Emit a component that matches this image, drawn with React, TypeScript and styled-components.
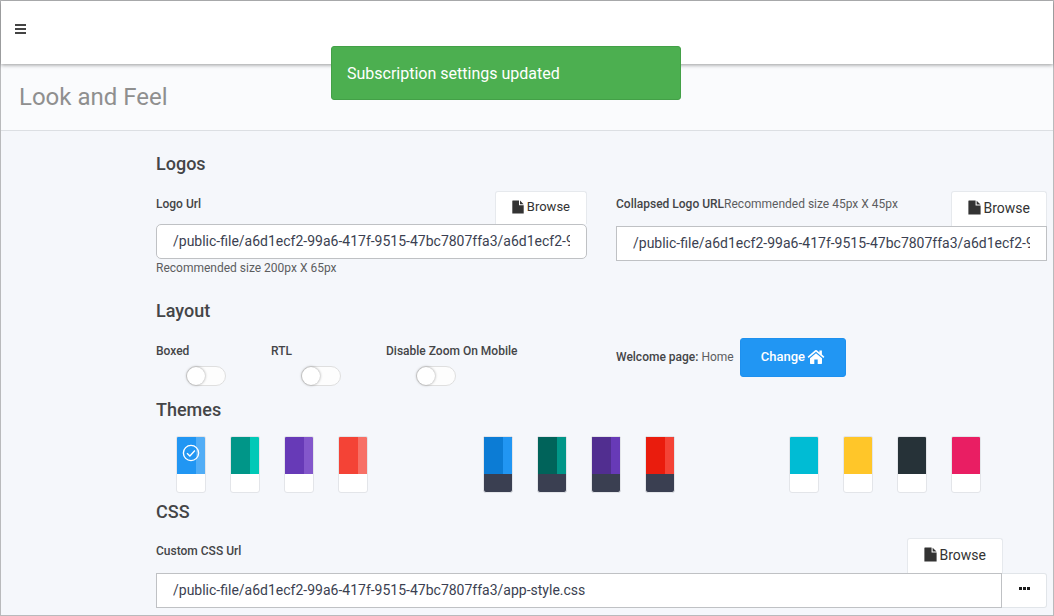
import React, { useState } from "react";
import styled, { createGlobalStyle } from "styled-components";

const GlobalStyle = createGlobalStyle`
  * { box-sizing: border-box; }
  body {
    margin: 0;
    background: #f5f7fa;
    color: #4f5052;
    font-family: Roboto, "Liberation Sans", sans-serif;
    font-size: 12px;
    line-height: 16px;
  }
  button, input { font-family: inherit; margin: 0; }
`;

const Page = styled.div`
  min-height: 100vh;
  border: 1px solid #b9babc;
  background: #f5f7fb;
`;

const TopBar = styled.header`
  position: relative;
  display: flex;
  align-items: center;
  height: 63px;
  padding: 0 13px 8px;
  background: #fff;
  box-shadow: 0 1px 4px rgba(0, 0, 0, 0.4);
`;

const MenuButton = styled.button`
  display: flex;
  padding: 0;
  border: 0;
  background: none;
  color: #444;
  cursor: pointer;
`;

const TitleBar = styled.div`
  display: flex;
  align-items: center;
  height: 67px;
  padding: 0 18px;
  background: #fafbfd;
  border-bottom: 1px solid #dcdfe3;
`;

const PageTitle = styled.h1`
  margin: 0;
  color: #8f8f8f;
  font-size: 24px;
  font-weight: 400;
  line-height: 32px;
`;

const Toast = styled.div`
  position: absolute;
  top: 46px;
  left: 50%;
  width: 350px;
  margin-left: -196px;
  padding: 17px 15px 15px;
  border: 1px solid #43a047;
  border-radius: 3px;
  background: #4caf50;
  color: #fff;
  font-size: 16px;
  line-height: 20px;
`;

const Content = styled.main`
  padding: 19px 6px 7px 155px;
`;

const SectionTitle = styled.h2`
  margin: 0;
  color: #444547;
  font-size: 18px;
  font-weight: 500;
  line-height: 28px;
`;

const Columns = styled.div<{ $count: number }>`
  display: grid;
  grid-template-columns: repeat(${(p) => p.$count}, minmax(0, 1fr));
  column-gap: 29px;
`;

const Section = styled.section<{ $gap: number }>`
  display: flex;
  flex-direction: column;
  gap: ${(p) => p.$gap}px;
`;

const Logos = styled(Section)`
  margin-bottom: 21px;
`;

const Layout = styled(Section)`
  margin-bottom: 10px;
`;

const Themes = styled(Section)`
  margin-bottom: 5px;
`;

const FieldHead = styled.div<{ $inset?: boolean }>`
  display: flex;
  justify-content: space-between;
  align-items: flex-start;
  padding-right: ${(p) => (p.$inset ? 44 : 0)}px;
`;

const Caption = styled.div`
  padding-top: 5px;
`;

const Label = styled.label`
  color: #444547;
  font-weight: 500;
`;

const Hint = styled.span`
  color: #5c5d5f;
`;

const HelpText = styled.p`
  margin: 0;
  padding-top: 1px;
  color: #5c5d5f;
`;

const BrowseButton = styled.button<{ $large?: boolean }>`
  display: flex;
  align-items: center;
  gap: 3px;
  height: ${(p) => (p.$large ? 35 : 33)}px;
  padding: 0 16px 3px;
  border: 1px solid #e6e9ed;
  border-bottom: 0;
  border-radius: 3px 3px 0 0;
  background: #fff;
  color: #333;
  font-size: ${(p) => (p.$large ? 14 : 13)}px;
  cursor: pointer;
`;

const TextInput = styled.input<{ $rounded?: boolean }>`
  display: block;
  flex: 1;
  width: 100%;
  min-width: 0;
  height: 35px;
  padding: 0 16px 1px;
  border: 1px solid #bfc1c4;
  border-radius: ${(p) => (p.$rounded ? 5 : 0)}px;
  background: #fff;
  color: #3b3f51;
  font-size: 14px;
  outline: none;
`;

const InputGroup = styled.div`
  display: flex;
`;

const MoreButton = styled.button`
  display: flex;
  align-items: center;
  justify-content: center;
  width: 45px;
  padding: 0 0 4px;
  border: 1px solid #e1e5e9;
  border-left: 0;
  border-radius: 0 3px 3px 0;
  background: #fff;
  color: #1b1b1b;
  cursor: pointer;
`;

const Option = styled.label<{ $span?: number }>`
  grid-column: span ${(p) => p.$span ?? 1};
  display: flex;
  flex-direction: column;
  gap: 7px;
  color: #444547;
  font-weight: 500;
  white-space: nowrap;
`;

const Switch = styled.input.attrs({ type: "checkbox", role: "switch" })`
  appearance: none;
  display: flex;
  width: 40px;
  height: 20px;
  margin-left: 30px;
  border: 1px solid #dfdfdf;
  border-radius: 10px;
  background: #fdfdfd;
  cursor: pointer;

  &::before {
    content: "";
    width: 18px;
    height: 18px;
    border-radius: 50%;
    background: #fff;
    box-shadow: 0 0 3px rgba(0, 0, 0, 0.4);
  }
  &:checked {
    justify-content: flex-end;
    background: #2196f3;
  }
`;

const OptionsRow = styled(Columns)`
  padding-top: 5px;
`;

const Welcome = styled.div`
  display: flex;
  align-items: center;
  gap: 6px;
  height: 39px;
`;

const WelcomeText = styled.div`
  display: flex;
  gap: 3px;
  padding-bottom: 2px;
`;

const WelcomeLabel = styled.span`
  color: #444547;
  font-weight: 500;
`;

const ChangeButton = styled.button`
  display: flex;
  align-items: center;
  gap: 2px;
  height: 39px;
  padding: 0 20px 2px;
  border: 1px solid #1e90ee;
  border-radius: 3px;
  background: #2196f3;
  color: #fff;
  font-size: 13px;
  font-weight: 500;
  cursor: pointer;
`;

const SwatchList = styled.div`
  display: flex;
  gap: 24px;
  padding-left: 20px;
`;

const Swatch = styled.label<{ $dark?: boolean }>`
  display: grid;
  width: 30px;
  height: 57px;
  grid-template-rows: 37px 1fr;
  overflow: hidden;
  border: 1px solid #e3e5e9;
  border-radius: 2px 2px 3px 3px;
  background: ${(p) => (p.$dark ? "#3a3f51" : "#fff")};
  cursor: pointer;
`;

const SwatchColor = styled.span<{ $main: string; $side: string }>`
  display: flex;
  align-items: center;
  justify-content: center;
  padding-bottom: 6px;
  background: linear-gradient(to right, ${(p) => p.$main} 19px, ${(p) => p.$side} 19px);
  color: #fff;
`;

const SwatchRadio = styled.input.attrs({ type: "radio", name: "theme" })`
  appearance: none;
  width: 0;
  height: 0;
`;

const MenuIcon = () => (
  <svg width="13" height="12" viewBox="0 0 13 12" fill="currentColor" aria-hidden="true">
    <path d="M1 1h11v2H1zM1 5h11v2H1zM1 9h11v2H1z" />
  </svg>
);

const FileIcon = ({ size = 13 }: { size?: number }) => (
  <svg width={size - 1} height={size + 1} viewBox="0 0 12 14" fill="currentColor" aria-hidden="true">
    <path d="M0.8 0.5H7V5.2H11.7V13.5H0.3V1Q0.3 0.5 0.8 0.5Z" />
    <path d="M8 0.6L11.6 4.2H8Z" />
  </svg>
);

const HomeIcon = () => (
  <svg width="18" height="16" viewBox="0 0 18 16" fill="currentColor" aria-hidden="true">
    <path d="M9 4.300L15 9.300v5q0 .7-.7.7h-3.600v-4.500H7.300V15H3.700q-.7 0-.7-.7V9.300z" />
    <path d="M8.100 1.300q.9-.7 1.800 0L12.400 3.400V1.600h2.500v4l2.500 2.100-1 1.200L9 2.800 1.600 8.900l-1-1.200z" />
  </svg>
);

const CheckIcon = () => (
  <svg width="18" height="18" viewBox="0 0 18 18" fill="none" stroke="currentColor" strokeWidth="1.4" aria-hidden="true">
    <circle cx="9" cy="9" r="7.6" />
    <path d="M5 9.200l2.900 2.700 5-5.400" />
  </svg>
);

const DotsIcon = () => (
  <svg width="13" height="3" viewBox="0 0 13 3" fill="currentColor" aria-hidden="true">
    <path d="M1 0h3v3H1zM5 0h3v3H5zM9 0h3v3H9z" />
  </svg>
);

type Theme = { name: string; main: string; side: string; dark?: boolean };

const themeGroups: Theme[][] = [
  [
    { name: "Blue", main: "#2196f3", side: "#51adf6" },
    { name: "Teal", main: "#009688", side: "#00c9b7" },
    { name: "Purple", main: "#673ab7", side: "#8357cb" },
    { name: "Red", main: "#f44336", side: "#f77066" },
  ],
  [
    { name: "Dark blue", main: "#0c7cd5", side: "#2196f3", dark: true },
    { name: "Dark teal", main: "#00635a", side: "#009688", dark: true },
    { name: "Dark purple", main: "#512e90", side: "#673ab7", dark: true },
    { name: "Dark red", main: "#ea1c0d", side: "#f44336", dark: true },
  ],
  [
    { name: "Cyan", main: "#00bcd4", side: "#00bcd4" },
    { name: "Amber", main: "#ffc629", side: "#ffc629" },
    { name: "Charcoal", main: "#263238", side: "#263238" },
    { name: "Pink", main: "#e91e63", side: "#e91e63" },
  ],
];

const logoPath = "/public-file/a6d1ecf2-99a6-417f-9515-47bc7807ffa3/a6d1ecf2-99a6-417f-9515-47bc7807ffa3.png";

export default function App() {
  const [theme, setTheme] = useState("Blue");

  return (
    <Page>
      <GlobalStyle />
      <TopBar>
        <MenuButton type="button" aria-label="Toggle menu">
          <MenuIcon />
        </MenuButton>
      </TopBar>
      <TitleBar>
        <PageTitle>Look and Feel</PageTitle>
      </TitleBar>
      <Toast role="status">Subscription settings updated</Toast>

      <Content>
        <Logos $gap={13}>
          <SectionTitle>Logos</SectionTitle>
          <Columns $count={2}>
            <div>
              <FieldHead>
                <Caption>
                  <Label htmlFor="logo-url">Logo Url</Label>
                </Caption>
                <BrowseButton type="button">
                  <FileIcon />
                  Browse
                </BrowseButton>
              </FieldHead>
              <TextInput id="logo-url" $rounded defaultValue={logoPath} />
              <HelpText>Recommended size 200px X 65px</HelpText>
            </div>
            <div>
              <FieldHead>
                <Caption>
                  <Label htmlFor="collapsed-logo-url">Collapsed Logo URL</Label>
                  <Hint>Recommended size 45px X 45px</Hint>
                </Caption>
                <BrowseButton type="button" $large>
                  <FileIcon size={14} />
                  Browse
                </BrowseButton>
              </FieldHead>
              <TextInput id="collapsed-logo-url" defaultValue={logoPath} />
            </div>
          </Columns>
        </Logos>

        <Layout $gap={13}>
          <SectionTitle>Layout</SectionTitle>
          <Columns $count={2}>
            <OptionsRow $count={4}>
              <Option>
                Boxed
                <Switch />
              </Option>
              <Option>
                RTL
                <Switch />
              </Option>
              <Option $span={2}>
                Disable Zoom On Mobile
                <Switch />
              </Option>
            </OptionsRow>
            <Welcome>
              <WelcomeText>
                <WelcomeLabel>Welcome page:</WelcomeLabel>
                <Hint>Home</Hint>
              </WelcomeText>
              <ChangeButton type="button">
                Change
                <HomeIcon />
              </ChangeButton>
            </Welcome>
          </Columns>
        </Layout>

        <Themes $gap={12}>
          <SectionTitle>Themes</SectionTitle>
          <Columns $count={3}>
            {themeGroups.map((group, i) => (
              <SwatchList key={i}>
                {group.map((t) => (
                  <Swatch key={t.name} $dark={t.dark}>
                    <SwatchColor $main={t.main} $side={t.side}>
                      <SwatchRadio
                        aria-label={t.name}
                        checked={theme === t.name}
                        onChange={() => setTheme(t.name)}
                      />
                      {theme === t.name && <CheckIcon />}
                    </SwatchColor>
                  </Swatch>
                ))}
              </SwatchList>
            ))}
          </Columns>
        </Themes>

        <Section $gap={12}>
          <SectionTitle>CSS</SectionTitle>
          <div>
            <FieldHead $inset>
              <Caption>
                <Label htmlFor="css-url">Custom CSS Url</Label>
              </Caption>
              <BrowseButton type="button" $large>
                <FileIcon size={14} />
                Browse
              </BrowseButton>
            </FieldHead>
            <InputGroup>
              <TextInput
                id="css-url"
                defaultValue="/public-file/a6d1ecf2-99a6-417f-9515-47bc7807ffa3/app-style.css"
              />
              <MoreButton type="button" aria-label="More options">
                <DotsIcon />
              </MoreButton>
            </InputGroup>
          </div>
        </Section>
      </Content>
    </Page>
  );
}
